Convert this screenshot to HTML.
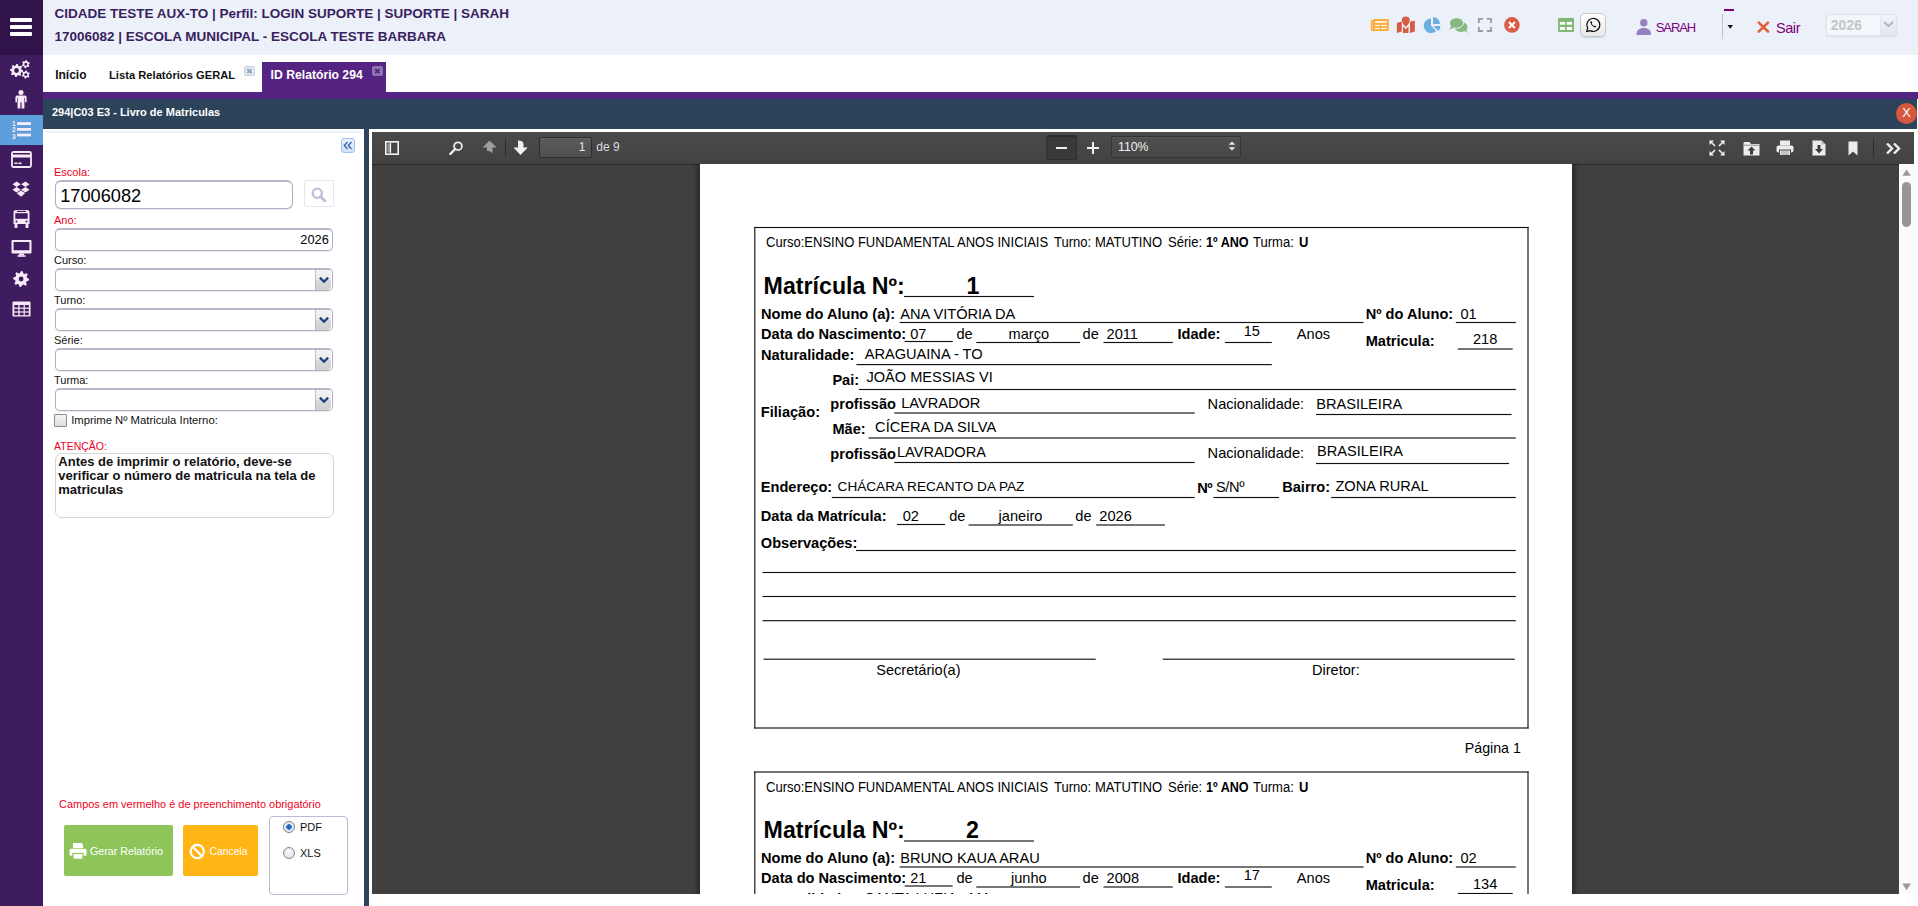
<!DOCTYPE html>
<html><head><meta charset="utf-8">
<style>
*{box-sizing:border-box;margin:0;padding:0}
html,body{width:1918px;height:906px;overflow:hidden;background:#fff;font-family:"Liberation Sans",sans-serif;color:#000}
.ab{position:absolute}
.t{position:absolute;white-space:nowrap;line-height:1}
.ln{position:absolute}
svg{position:absolute;display:block}
</style></head><body>
<div class="ab" style="left:0px;top:0px;width:43px;height:906px;background:#3f1b5f"></div>
<div class="ab" style="left:0px;top:0px;width:43px;height:55px;background:#2f1349"></div>
<div class="ab" style="left:0px;top:115px;width:43px;height:30px;background:#5d9fdc"></div>
<div class="ab" style="left:10px;top:18px;width:22px;height:3.5px;background:#fff;border-radius:1px"></div>
<div class="ab" style="left:10px;top:25px;width:22px;height:3.5px;background:#fff;border-radius:1px"></div>
<div class="ab" style="left:10px;top:32px;width:22px;height:3.5px;background:#fff;border-radius:1px"></div>
<div class="ab" style="left:43px;top:0px;width:1875px;height:55px;background:#ebf0f9"></div>
<div class="t" style="left:54.4px;top:6.6px;font-size:13.5px;font-weight:bold;color:#3a1f60;">CIDADE TESTE AUX-TO | Perfil: LOGIN SUPORTE | SUPORTE | SARAH</div>
<div class="t" style="left:54.4px;top:29.6px;font-size:13.5px;font-weight:bold;color:#3a1f60;">17006082 | ESCOLA MUNICIPAL - ESCOLA TESTE BARBARA</div>
<div class="ab" style="left:43px;top:55px;width:1875px;height:37px;background:#fff"></div>
<div class="t" style="left:55.2px;top:68.8px;font-size:12px;font-weight:bold;color:#111;">Início</div>
<div class="t" style="left:109.0px;top:69.5px;font-size:11.2px;font-weight:bold;color:#111;">Lista Relatórios GERAL</div>
<div class="ab" style="left:244px;top:66px;width:11px;height:10px;background:#e3e9f3;border:1px solid #c5d0e0;border-radius:2px"></div>
<div class="t" style="left:246.2px;top:67.7px;font-size:8px;color:#8fa4c4;">&#x2716;</div>
<div class="ab" style="left:262px;top:62px;width:124px;height:30px;background:#552482"></div>
<div class="t" style="left:270.6px;top:68.7px;font-size:12.2px;font-weight:bold;color:#fff;">ID Relatório 294</div>
<div class="ab" style="left:372px;top:65.5px;width:11px;height:10.5px;background:#8d75b0;border-radius:2px"></div>
<div class="t" style="left:374.2px;top:67.7px;font-size:8px;color:#552482;">&#x2716;</div>
<div class="ab" style="left:43px;top:92px;width:1875px;height:7px;background:#552482"></div>
<div class="ab" style="left:43px;top:99px;width:1874px;height:30px;background:#2c4359"></div>
<div class="ab" style="left:1917px;top:99px;width:1px;height:30px;background:#fff"></div>
<div class="t" style="left:52.0px;top:107.2px;font-size:11px;font-weight:bold;color:#fff;">294|C03 E3 - Livro de Matriculas</div>
<div class="ab" style="left:1896px;top:103px;width:21px;height:21px;background:#d5583f;border-radius:50%"></div>
<div class="t" style="left:1902.2px;top:107.2px;font-size:12.8px;color:#fff;">X</div>
<svg style="left:10px;top:60px" width="21" height="20" viewBox="0 0 21 20"><path d="M6.50 3.90 L7.79 4.03 L8.41 5.88 L9.28 6.34 L11.17 5.83 L11.99 6.83 L11.12 8.59 L11.40 9.52 L13.10 10.50 L12.97 11.79 L11.12 12.41 L10.66 13.28 L11.17 15.17 L10.17 15.99 L8.41 15.12 L7.48 15.40 L6.50 17.10 L5.21 16.97 L4.59 15.12 L3.72 14.66 L1.83 15.17 L1.01 14.17 L1.88 12.41 L1.60 11.48 L-0.10 10.50 L0.03 9.21 L1.88 8.59 L2.34 7.72 L1.83 5.83 L2.83 5.01 L4.59 5.88 L5.52 5.60 Z M8.90 10.50 A2.4 2.4 0 1 0 4.10 10.50 A2.4 2.4 0 1 0 8.90 10.50 ZM15.80 0.10 L16.86 0.24 L17.30 1.60 L17.92 2.08 L19.35 2.15 L19.76 3.14 L18.80 4.20 L18.70 4.98 L19.35 6.25 L18.70 7.10 L17.30 6.80 L16.58 7.10 L15.80 8.30 L14.74 8.16 L14.30 6.80 L13.68 6.32 L12.25 6.25 L11.84 5.26 L12.80 4.20 L12.90 3.42 L12.25 2.15 L12.90 1.30 L14.30 1.60 L15.02 1.30 Z M17.30 4.20 A1.5 1.5 0 1 0 14.30 4.20 A1.5 1.5 0 1 0 17.30 4.20 ZM15.80 10.40 L16.86 10.54 L17.30 11.90 L17.92 12.38 L19.35 12.45 L19.76 13.44 L18.80 14.50 L18.70 15.28 L19.35 16.55 L18.70 17.40 L17.30 17.10 L16.58 17.40 L15.80 18.60 L14.74 18.46 L14.30 17.10 L13.68 16.62 L12.25 16.55 L11.84 15.56 L12.80 14.50 L12.90 13.72 L12.25 12.45 L12.90 11.60 L14.30 11.90 L15.02 11.60 Z M17.30 14.50 A1.5 1.5 0 1 0 14.30 14.50 A1.5 1.5 0 1 0 17.30 14.50 Z" fill="#f7eaf7" fill-rule="evenodd"/></svg>
<svg style="left:15px;top:90px" width="13" height="19" viewBox="0 0 13 19"><circle cx="6" cy="2.6" r="2.5" fill="#f7eaf7"/><path d="M2.2 5.6 H9.8 A1.8 1.8 0 0 1 11.6 7.4 V12.2 H10 V7.8 H9.4 V18.6 H6.6 V12.4 H5.4 V18.6 H2.6 V7.8 H2 V12.2 H0.4 V7.4 A1.8 1.8 0 0 1 2.2 5.6 Z" fill="#f7eaf7"/></svg>
<svg style="left:12px;top:120px" width="20" height="19" viewBox="0 0 20 19"><text x="0" y="6" font-family="Liberation Sans" font-weight="bold" font-size="6.5" fill="#f7eaf7">1</text><text x="0" y="12" font-family="Liberation Sans" font-weight="bold" font-size="6.5" fill="#f7eaf7">2</text><text x="0" y="18.5" font-family="Liberation Sans" font-weight="bold" font-size="6.5" fill="#f7eaf7">3</text><rect x="5" y="2.2" width="14" height="2.8" fill="#f7eaf7"/><rect x="5" y="8" width="14" height="2.8" fill="#f7eaf7"/><rect x="5" y="13.6" width="14" height="2.8" fill="#f7eaf7"/></svg>
<svg style="left:11px;top:151px" width="21" height="17" viewBox="0 0 21 17"><rect x="1" y="1" width="19" height="15" rx="1.5" fill="none" stroke="#f7eaf7" stroke-width="1.8"/><rect x="1" y="3.5" width="19" height="3" fill="#f7eaf7"/><rect x="3.5" y="11.5" width="3" height="1.6" fill="#f7eaf7"/><rect x="7.5" y="11.5" width="3" height="1.6" fill="#f7eaf7"/></svg>
<svg style="left:12px;top:181px" width="18" height="17" viewBox="0 0 18 17"><path d="M4.5 0.5 L0.5 3.2 L4.5 6 L8.8 3.2 Z M13.5 0.5 L9.2 3.2 L13.5 6 L17.5 3.2 Z M4.5 6 L0.5 8.8 L4.5 11.4 L8.8 8.8 Z M13.5 6 L9.2 8.8 L13.5 11.4 L17.5 8.8 Z M9 9.6 L4.8 12.2 L9 15.8 L13.2 12.2 Z" fill="#f7eaf7"/></svg>
<svg style="left:13px;top:209px" width="17" height="20" viewBox="0 0 17 20"><path d="M3 1 H14 A2.5 2.5 0 0 1 16.5 3.5 V15 H0.5 V3.5 A2.5 2.5 0 0 1 3 1 Z" fill="#f7eaf7"/><rect x="2.3" y="4.2" width="12.4" height="5.6" fill="#3f1b5f"/><rect x="4" y="1.8" width="9" height="1.2" fill="#3f1b5f"/><circle cx="3.5" cy="12.5" r="1" fill="#3f1b5f"/><circle cx="13.5" cy="12.5" r="1" fill="#3f1b5f"/><rect x="1.5" y="15" width="3" height="4" rx="0.8" fill="#f7eaf7"/><rect x="12.5" y="15" width="3" height="4" rx="0.8" fill="#f7eaf7"/></svg>
<svg style="left:11px;top:239px" width="21" height="19" viewBox="0 0 21 19"><path d="M1.5 1 H19.5 A1 1 0 0 1 20.5 2 V13.5 A1 1 0 0 1 19.5 14.5 H1.5 A1 1 0 0 1 0.5 13.5 V2 A1 1 0 0 1 1.5 1 Z M2.6 3 V11.2 H18.4 V3 Z" fill="#f7eaf7" fill-rule="evenodd"/><rect x="8" y="14.5" width="5" height="1.8" fill="#f7eaf7"/><rect x="6.5" y="16.2" width="8" height="1.6" fill="#f7eaf7"/></svg>
<svg style="left:13px;top:271px" width="17" height="17" viewBox="0 0 17 17"><path d="M8.10 0.00 L9.66 0.15 L10.40 2.46 L11.43 3.01 L13.76 2.34 L14.75 3.56 L13.64 5.70 L13.98 6.83 L16.10 8.00 L15.95 9.56 L13.64 10.30 L13.09 11.33 L13.76 13.66 L12.54 14.65 L10.40 13.54 L9.27 13.88 L8.10 16.00 L6.54 15.85 L5.80 13.54 L4.77 12.99 L2.44 13.66 L1.45 12.44 L2.56 10.30 L2.22 9.17 L0.10 8.00 L0.25 6.44 L2.56 5.70 L3.11 4.67 L2.44 2.34 L3.66 1.35 L5.80 2.46 L6.93 2.12 Z M10.50 8.00 A2.4 2.4 0 1 0 5.70 8.00 A2.4 2.4 0 1 0 10.50 8.00 Z" fill="#f7eaf7" fill-rule="evenodd"/></svg>
<svg style="left:12px;top:301px" width="19" height="16" viewBox="0 0 19 16"><path d="M1.5 0.5 H17.5 A1 1 0 0 1 18.5 1.5 V14.5 A1 1 0 0 1 17.5 15.5 H1.5 A1 1 0 0 1 0.5 14.5 V1.5 A1 1 0 0 1 1.5 0.5 Z" fill="#f7eaf7"/><rect x="2.3" y="4" width="4" height="2.6" fill="#3f1b5f"/><rect x="7.6" y="4" width="4" height="2.6" fill="#3f1b5f"/><rect x="12.8" y="4" width="4" height="2.6" fill="#3f1b5f"/><rect x="2.3" y="7.8" width="4" height="2.6" fill="#3f1b5f"/><rect x="7.6" y="7.8" width="4" height="2.6" fill="#3f1b5f"/><rect x="12.8" y="7.8" width="4" height="2.6" fill="#3f1b5f"/><rect x="2.3" y="11.6" width="4" height="2.6" fill="#3f1b5f"/><rect x="7.6" y="11.6" width="4" height="2.6" fill="#3f1b5f"/><rect x="12.8" y="11.6" width="4" height="2.6" fill="#3f1b5f"/></svg>
<svg style="left:1370px;top:18px" width="20" height="14" viewBox="0 0 20 14"><rect x="3" y="0.9" width="15.8" height="12.1" rx="0.8" fill="#fdab3c"/><rect x="0.9" y="2.1" width="2.6" height="10.9" rx="0.8" fill="#fdab3c"/><rect x="2.1" y="3" width="0.5" height="9" fill="#fff" opacity=".55"/><rect x="5" y="3.2" width="11.8" height="1.6" fill="#fff"/><rect x="5" y="6.9" width="5" height="1.1" fill="#fff"/><rect x="11.2" y="6.9" width="5.6" height="1.1" fill="#fff"/><rect x="5" y="9.9" width="5" height="1.2" fill="#fff"/><rect x="11.2" y="9.9" width="5.6" height="1.2" fill="#fff"/></svg>
<svg style="left:1396px;top:16px" width="20" height="18" viewBox="0 0 20 18"><path d="M0.8 7 L5.8 5.6 L5.8 15.6 L0.8 17 Z M7 10.2 L9.8 13.2 L12.5 10.2 L12.5 17 L7 17 Z M14 5.8 L18.8 4.4 L18.8 15.6 L14 17 Z" fill="#d75c45"/><path d="M9.8 0.5 A4 4 0 0 1 13.8 4.5 C13.8 7 9.8 11 9.8 11 C9.8 11 5.8 7 5.8 4.5 A4 4 0 0 1 9.8 0.5 Z" fill="#d75c45"/></svg>
<svg style="left:1423px;top:17px" width="19" height="16" viewBox="0 0 19 16"><path d="M8 1.5 L8 8.8 L13.2 14 A7.3 7.3 0 1 1 8 1.5 Z" fill="#6aafe0"/><path d="M10 0 A7 7 0 0 1 17 7 L10 7 Z" fill="#6aafe0"/><path d="M10.5 9 L17.5 9 A7 7 0 0 1 15.2 14 Z" fill="#6aafe0"/></svg>
<svg style="left:1449px;top:17px" width="20" height="16" viewBox="0 0 20 16"><ellipse cx="12" cy="10" rx="6.5" ry="5" fill="#85b87d"/><path d="M15 13.5 L19 16 L16 11 Z" fill="#85b87d"/><ellipse cx="7.5" cy="6" rx="7" ry="5.3" fill="#85b87d" stroke="#ebf0f9" stroke-width="1"/><path d="M2 9 L0.5 12.5 L5 10.5 Z" fill="#85b87d"/></svg>
<svg style="left:1477px;top:17px" width="16" height="16" viewBox="0 0 16 16"><path d="M1.8 5.9 V1.9 H5.9 M9.9 1.9 H14 V5.9 M14 9.9 V14 H9.9 M5.9 14 H1.8 V9.9" stroke="#9a9a9a" stroke-width="1.8" fill="none"/></svg>
<svg style="left:1503px;top:17px" width="17" height="16" viewBox="0 0 17 16"><circle cx="8.9" cy="7.9" r="7.8" fill="#d95d45"/><path d="M5.9 4.9 L11.9 10.9 M11.9 4.9 L5.9 10.9" stroke="#fff" stroke-width="2.1"/></svg>
<svg style="left:1557px;top:17px" width="18" height="16" viewBox="0 0 18 16"><rect x="1" y="1" width="16" height="14" rx="1" fill="#82b676"/><rect x="2.8" y="4.9" width="5.2" height="2.8" fill="#fff"/><rect x="9.7" y="4.9" width="5.3" height="2.8" fill="#fff"/><rect x="2.8" y="10" width="5.2" height="3" fill="#fff"/><rect x="9.7" y="10" width="5.3" height="3" fill="#fff"/></svg>
<div class="ab" style="left:1580px;top:13px;width:26px;height:24px;background:linear-gradient(#fff,#e9e9e9);border:1px solid #c8c8c8;border-radius:5px;box-shadow:0 1px 1px rgba(0,0,0,.12)"></div>
<svg style="left:1585px;top:17px" width="16" height="16" viewBox="0 0 16 16"><path d="M1.6 14.6 L2.7 11.2 A6.5 6.5 0 1 1 5.2 13.6 Z" fill="none" stroke="#111" stroke-width="1.25" stroke-linejoin="round"/><path d="M5.4 4.3 C4.9 6.4 7.4 10 10.4 10.6 L11.3 9.4 L9.9 8.4 L9.1 9 C8.2 8.5 7.1 7.4 6.7 6.5 L7.3 5.7 L6.5 4.2 Z" fill="#111"/></svg>
<svg style="left:1636px;top:19px" width="16" height="16" viewBox="0 0 16 16"><circle cx="7.8" cy="3.8" r="3.7" fill="#9580c0"/><path d="M0.5 16 C0.5 11 3 9 7.8 9 C12.6 9 15 11 15 16 Z" fill="#9580c0"/></svg>
<div class="t" style="left:1655.8px;top:21.3px;font-size:13px;color:#800080;letter-spacing:-1.1px">SARAH</div>
<div class="ab" style="left:1724px;top:9px;width:10px;height:2.4px;background:#800080"></div>
<div class="ab" style="left:1722px;top:14px;width:1px;height:25px;background:#c3c3c8"></div>
<svg style="left:1727px;top:25px" width="7" height="4" viewBox="0 0 7 4"><path d="M0.5 0 L6 0 L3.25 3.7 Z" fill="#111"/></svg>
<svg style="left:1757px;top:21px" width="13" height="12" viewBox="0 0 13 12"><path d="M1.8 1.6 L11 10.5 M11 1.6 L1.8 10.5" stroke="#e0603c" stroke-width="2.6" stroke-linecap="round"/></svg>
<div class="t" style="left:1775.9px;top:20.5px;font-size:14.5px;color:#800080;letter-spacing:-0.4px">Sair</div>
<div class="ab" style="left:1826px;top:14px;width:71px;height:22px;background:#f3f6fa;border:1px solid #dfe4ec;border-radius:4px;box-shadow:0 1px 2px rgba(0,0,0,.08)"></div>
<div class="ab" style="left:1880px;top:15px;width:16px;height:20px;background:linear-gradient(#f1f3f6,#e3e7ec);border-left:1px solid #e2e6ee;border-radius:0 3px 3px 0"></div>
<div class="t" style="left:1830.7px;top:18.7px;font-size:13.8px;font-weight:bold;color:#c2c4c8;letter-spacing:0.2px">2026</div>
<svg style="left:1883px;top:21px" width="11" height="6" viewBox="0 0 11 6"><path d="M1 1 L5.5 5 L10 1" stroke="#a9b8d8" stroke-width="2" fill="none"/></svg>
<div class="ab" style="left:43px;top:129px;width:321px;height:777px;background:#fff"></div>
<div class="ab" style="left:47px;top:131px;width:314px;height:2px;background:#edf2f9"></div>
<div class="ab" style="left:341px;top:138px;width:14px;height:15px;background:linear-gradient(#e8f1fb,#d2e3f7);border:1px solid #9fc3ec;border-radius:3px"></div>
<svg style="left:343px;top:141px" width="10" height="9" viewBox="0 0 10 9"><path d="M4.5 1 L1.3 4.5 L4.5 8 M8.5 1 L5.3 4.5 L8.5 8" stroke="#3b6aab" stroke-width="1.4" fill="none"/></svg>
<div class="t" style="left:54.0px;top:166.7px;font-size:11px;color:#f0001c;">Escola:</div>
<div class="ab" style="left:55px;top:180px;width:238px;height:29px;background:#fff;border:1px solid #aab0c6;border-top:2px solid #b3b8cb;border-radius:6px;box-shadow:0 1px 1px rgba(0,0,0,.08)"></div>
<div class="t" style="left:60.2px;top:186.6px;font-size:18.2px;color:#000;">17006082</div>
<div class="ab" style="left:304px;top:180px;width:30px;height:27px;background:#fff;border:1px solid #e6e8ee;border-radius:2px"></div>
<svg style="left:311px;top:187px" width="16" height="15" viewBox="0 0 16 15"><circle cx="6.3" cy="6.3" r="4.6" stroke="#c5bbdf" stroke-width="2.3" fill="none"/><path d="M9.8 9.8 L14 14" stroke="#c5bbdf" stroke-width="2.8" stroke-linecap="round"/></svg>
<div class="t" style="left:54.0px;top:214.5px;font-size:11px;color:#f0001c;">Ano:</div>
<div class="ab" style="left:55px;top:228px;width:278px;height:22.5px;background:#fff;border:1px solid #aab0c6;border-top:2px solid #b3b8cb;border-radius:5px;box-shadow:0 1px 1px rgba(0,0,0,.08)"></div>
<div class="t" style="left:-71.2px;width:400px;text-align:right;top:234.2px;font-size:12.8px;color:#000;">2026</div>
<div class="t" style="left:54.0px;top:254.5px;font-size:11px;color:#111;">Curso:</div>
<div class="ab" style="left:55px;top:268.0px;width:278px;height:23px;background:#fff;border:1px solid #aab0c6;border-top:2px solid #b3b8cb;border-radius:5px;box-shadow:0 1px 1px rgba(0,0,0,.08)"></div>
<div class="ab" style="left:315px;top:270.0px;width:17px;height:20px;background:linear-gradient(#f3f3f3 0,#ececec 45%,#d6d6d6 55%,#d2d2d2 100%);border-left:1px solid #b9bdd0;border-radius:0 4px 4px 0;box-shadow:inset -1px 0 0 #fff"></div>
<svg style="left:318.5px;top:276.5px" width="11" height="7" viewBox="0 0 11 7"><path d="M0.8 0.6 L5 4.6 L9.2 0.6" stroke="#22427e" stroke-width="2.3" fill="none"/></svg>
<div class="t" style="left:54.0px;top:294.5px;font-size:11px;color:#111;">Turno:</div>
<div class="ab" style="left:55px;top:308.0px;width:278px;height:23px;background:#fff;border:1px solid #aab0c6;border-top:2px solid #b3b8cb;border-radius:5px;box-shadow:0 1px 1px rgba(0,0,0,.08)"></div>
<div class="ab" style="left:315px;top:310.0px;width:17px;height:20px;background:linear-gradient(#f3f3f3 0,#ececec 45%,#d6d6d6 55%,#d2d2d2 100%);border-left:1px solid #b9bdd0;border-radius:0 4px 4px 0;box-shadow:inset -1px 0 0 #fff"></div>
<svg style="left:318.5px;top:316.5px" width="11" height="7" viewBox="0 0 11 7"><path d="M0.8 0.6 L5 4.6 L9.2 0.6" stroke="#22427e" stroke-width="2.3" fill="none"/></svg>
<div class="t" style="left:54.0px;top:335.0px;font-size:11px;color:#111;">Série:</div>
<div class="ab" style="left:55px;top:348.0px;width:278px;height:23px;background:#fff;border:1px solid #aab0c6;border-top:2px solid #b3b8cb;border-radius:5px;box-shadow:0 1px 1px rgba(0,0,0,.08)"></div>
<div class="ab" style="left:315px;top:350.0px;width:17px;height:20px;background:linear-gradient(#f3f3f3 0,#ececec 45%,#d6d6d6 55%,#d2d2d2 100%);border-left:1px solid #b9bdd0;border-radius:0 4px 4px 0;box-shadow:inset -1px 0 0 #fff"></div>
<svg style="left:318.5px;top:356.5px" width="11" height="7" viewBox="0 0 11 7"><path d="M0.8 0.6 L5 4.6 L9.2 0.6" stroke="#22427e" stroke-width="2.3" fill="none"/></svg>
<div class="t" style="left:54.0px;top:375.1px;font-size:11px;color:#111;">Turma:</div>
<div class="ab" style="left:55px;top:388.0px;width:278px;height:23px;background:#fff;border:1px solid #aab0c6;border-top:2px solid #b3b8cb;border-radius:5px;box-shadow:0 1px 1px rgba(0,0,0,.08)"></div>
<div class="ab" style="left:315px;top:390.0px;width:17px;height:20px;background:linear-gradient(#f3f3f3 0,#ececec 45%,#d6d6d6 55%,#d2d2d2 100%);border-left:1px solid #b9bdd0;border-radius:0 4px 4px 0;box-shadow:inset -1px 0 0 #fff"></div>
<svg style="left:318.5px;top:396.5px" width="11" height="7" viewBox="0 0 11 7"><path d="M0.8 0.6 L5 4.6 L9.2 0.6" stroke="#22427e" stroke-width="2.3" fill="none"/></svg>
<div class="ab" style="left:54px;top:414px;width:13px;height:13px;background:linear-gradient(#f3f3f3,#dedede);border:1px solid #8d8d8d;border-radius:1px"></div>
<div class="t" style="left:71.2px;top:414.8px;font-size:11.3px;color:#111;">Imprime Nº Matricula Interno:</div>
<div class="t" style="left:54.0px;top:440.5px;font-size:10.5px;color:#f0001c;">ATENÇÃO:</div>
<div class="ab" style="left:54.5px;top:453px;width:279px;height:64.5px;background:#fff;border:1px solid #d6d6d6;border-radius:7px"></div>
<div class="t" style="left:58.3px;top:454.7px;font-size:13px;font-weight:bold;color:#111;">Antes de imprimir o relatório, deve-se</div>
<div class="t" style="left:58.3px;top:468.6px;font-size:13px;font-weight:bold;color:#111;">verificar o número de matricula na tela de</div>
<div class="t" style="left:58.3px;top:482.6px;font-size:13px;font-weight:bold;color:#111;">matriculas</div>
<div class="t" style="left:59.0px;top:798.8px;font-size:10.96px;color:#f0001c;">Campos em vermelho é de preenchimento obrigatório</div>
<div class="ab" style="left:64px;top:825px;width:109px;height:50.5px;background:#8ec55a;border-radius:2px"></div>
<svg style="left:69px;top:842px" width="18" height="18" viewBox="0 0 18 18"><path d="M4 1 H12.5 L14 2.5 V6 H4 Z" fill="#fff"/><rect x="0.5" y="6.8" width="17" height="7" rx="1.5" fill="#fff"/><rect x="4" y="11.5" width="10" height="5.8" fill="#fff" stroke="#8ec55a" stroke-width="1.2"/><rect x="5" y="3" width="7" height="2.5" fill="#8ec55a" opacity="0"/></svg>
<div class="t" style="left:90.0px;top:845.9px;font-size:10.7px;color:#fff;">Gerar Relatório</div>
<div class="ab" style="left:183px;top:825px;width:75px;height:50.5px;background:#ffb515;border-radius:2px"></div>
<svg style="left:189px;top:842.5px" width="17" height="17" viewBox="0 0 17 17"><circle cx="8.3" cy="8.5" r="6.6" stroke="#fff" stroke-width="2.2" fill="none"/><path d="M3.8 4 L12.8 13" stroke="#fff" stroke-width="2.2"/></svg>
<div class="t" style="left:209.6px;top:847.1px;font-size:10.3px;color:#fff;">Cancela</div>
<div class="ab" style="left:268.5px;top:815.5px;width:79.5px;height:79px;background:#fff;border:1px solid #b9bdd4;border-radius:4px"></div>
<div class="ab" style="left:283px;top:821px;width:12px;height:12px;background:radial-gradient(circle at 50% 50%,#1f5fa8 0,#2a78c8 2.5px,#d6e4f2 3px,#eef3f8 5px);border:1px solid #7d7d7d;border-radius:50%"></div>
<div class="t" style="left:300.0px;top:821.7px;font-size:11px;color:#111;">PDF</div>
<div class="ab" style="left:283px;top:847px;width:12px;height:12px;background:radial-gradient(circle at 50% 40%,#fdfdfd,#d8d8d8);border:1px solid #8a8a8a;border-radius:50%"></div>
<div class="t" style="left:300.0px;top:847.7px;font-size:11px;color:#111;">XLS</div>
<div class="ab" style="left:364px;top:129px;width:5px;height:777px;background:#2c4359"></div>
<div class="ab" style="left:372px;top:132px;width:1542px;height:762px;background:#404040"></div>
<div class="ab" style="left:372px;top:132px;width:1542px;height:32px;background:linear-gradient(#4a4a4a,#424242);box-shadow:0 1px 0 rgba(0,0,0,.35)"></div>
<svg style="left:385px;top:141px" width="14" height="14" viewBox="0 0 14 14"><rect x="0.8" y="0.8" width="12.4" height="12.4" fill="none" stroke="#f2f2f2" stroke-width="1.6"/><rect x="2.4" y="2.4" width="2.6" height="9.2" fill="#9a9a9a"/><rect x="5" y="1.6" width="1.1" height="10.8" fill="#f2f2f2"/></svg>
<svg style="left:449px;top:141px" width="15" height="14" viewBox="0 0 15 14"><circle cx="9" cy="5.2" r="3.9" stroke="#eee" stroke-width="1.8" fill="none"/><path d="M6.2 8 L1.4 12.8" stroke="#eee" stroke-width="2.4" stroke-linecap="round"/></svg>
<svg style="left:482px;top:140px" width="16" height="16" viewBox="0 0 16 16"><path d="M7.5 0.5 L14.8 7.5 H10.5 V14.5 C10.5 12 8 11 5 11 V7.5 H0.5 Z" fill="#9d9d9d"/></svg>
<div class="ab" style="left:505px;top:139px;width:1px;height:17px;background:#2b2b2b"></div>
<svg style="left:513px;top:140px" width="16" height="16" viewBox="0 0 16 16"><path d="M5 0.5 C8 0.5 10.5 1.5 10.5 4 V7.5 H14.8 L7.5 15 L0.5 7.5 H5 Z" fill="#f0f0f0"/></svg>
<div class="ab" style="left:539px;top:136.5px;width:53px;height:21px;background:linear-gradient(#5a5a5a,#505050);border:1px solid #2e2e2e;border-radius:2px;box-shadow:inset 0 1px 0 rgba(255,255,255,.06)"></div>
<div class="t" style="left:185.5px;width:400px;text-align:right;top:140.8px;font-size:12px;color:#e6e6e6;">1</div>
<div class="t" style="left:596.3px;top:140.8px;font-size:12px;color:#dcdcdc;">de 9</div>
<div class="ab" style="left:1046px;top:135px;width:31px;height:24.5px;background:#3a3a3a;border:1px solid #2f2f2f;border-radius:2px;box-shadow:inset 0 1px 1px rgba(0,0,0,.25)"></div>
<div class="ab" style="left:1056px;top:147px;width:11px;height:2.2px;background:#f0f0f0"></div>
<div class="ab" style="left:1087px;top:146.8px;width:11.5px;height:2.4px;background:#f0f0f0"></div>
<div class="ab" style="left:1091.5px;top:142px;width:2.4px;height:11.8px;background:#f0f0f0"></div>
<div class="ab" style="left:1111px;top:135.5px;width:130px;height:22.5px;background:linear-gradient(#4f4f4f,#474747);border:1px solid #333;border-radius:2px;box-shadow:inset 0 1px 0 rgba(255,255,255,.05)"></div>
<div class="t" style="left:1118.0px;top:140.6px;font-size:12.3px;color:#f2f2f2;">110%</div>
<svg style="left:1228px;top:141px" width="8" height="10" viewBox="0 0 8 10"><path d="M4 0.5 L7.3 3.8 H0.7 Z M4 9.5 L7.3 6.2 H0.7 Z" fill="#e8e8e8"/></svg>
<svg style="left:1709px;top:140px" width="16" height="16" viewBox="0 0 16 16"><path d="M1 1 L6 6 M15 1 L10 6 M1 15 L6 10 M15 15 L10 10" stroke="#eee" stroke-width="1.6"/><path d="M0.5 0.5 H5 L0.5 5 Z M15.5 0.5 H11 L15.5 5 Z M0.5 15.5 H5 L0.5 11 Z M15.5 15.5 H11 L15.5 11 Z" fill="#eee"/></svg>
<svg style="left:1743px;top:140px" width="17" height="16" viewBox="0 0 17 16"><path d="M0.5 3 V15.5 H16.5 V4 H8 L6.5 2 H1.5 Z" fill="#ececec"/><path d="M0.5 5.2 H16.5" stroke="#777" stroke-width="0.8"/><path d="M8.5 6.5 L12.5 10.5 H10 V14.5 H7 V10.5 H4.5 Z" fill="#3d3d3d"/></svg>
<svg style="left:1776px;top:140px" width="18" height="16" viewBox="0 0 18 16"><rect x="4" y="0.5" width="10" height="5" fill="#ececec"/><rect x="0.5" y="5.5" width="17" height="7" rx="2" fill="#ececec"/><rect x="3.5" y="10" width="11" height="5.5" fill="#ececec" stroke="#444" stroke-width="1"/><path d="M5 12 H13 M5 14 H13" stroke="#888" stroke-width="0.8"/></svg>
<svg style="left:1812px;top:140px" width="14" height="16" viewBox="0 0 14 16"><path d="M0.5 0.5 H9.5 L13.5 4.5 V15.5 H0.5 Z" fill="#ececec"/><path d="M9.5 0.5 V4.5 H13.5" fill="#bbb"/><path d="M5.5 5 H8.5 V9 H11 L7 13.5 L3 9 H5.5 Z" fill="#3d3d3d"/></svg>
<svg style="left:1848px;top:141px" width="10" height="15" viewBox="0 0 10 15"><path d="M0.5 0.5 H9.5 V14.5 L5 10.5 L0.5 14.5 Z" fill="#ececec"/></svg>
<div class="ab" style="left:1873px;top:139px;width:1px;height:17.5px;background:#2b2b2b"></div>
<svg style="left:1886px;top:143px" width="16" height="11" viewBox="0 0 16 11"><path d="M1 0.5 L6 5.5 L1 10.5 M8 0.5 L13 5.5 L8 10.5" stroke="#eee" stroke-width="2.4" fill="none"/></svg>
<div class="ab" style="left:1899px;top:164px;width:15px;height:730px;background:#fbfbfb"></div>
<svg style="left:1902px;top:169px" width="10" height="8" viewBox="0 0 10 8"><path d="M4.6 0.5 L9 6.8 H0.3 Z" fill="#9a9a9a"/></svg>
<div class="ab" style="left:1902px;top:182px;width:9px;height:45px;background:#969696;border-radius:5px"></div>
<svg style="left:1902px;top:883px" width="10" height="8" viewBox="0 0 10 8"><path d="M4.6 7.3 L9 0.6 H0.3 Z" fill="#9a9a9a"/></svg>
<div class="ab" style="left:372px;top:164px;width:1527px;height:729.5px;overflow:hidden"><div class="ab" style="left:-372px;top:-164px;width:1918px;height:906px">
<div class="ab" style="left:700px;top:164px;width:872px;height:760px;background:#fff;box-shadow:-3px 0 6px rgba(0,0,0,.35), 3px 0 6px rgba(0,0,0,.35)"></div>
<div class="t" style="left:766.4px;top:235.2px;font-size:14.0px;transform:scaleX(0.93);transform-origin:0 0;">Curso:ENSINO FUNDAMENTAL ANOS INICIAIS</div>
<div class="t" style="left:1053.8px;top:235.2px;font-size:14.0px;transform:scaleX(0.93);transform-origin:0 0;">Turno:</div>
<div class="t" style="left:1095.0px;top:235.2px;font-size:14.0px;transform:scaleX(0.93);transform-origin:0 0;">MATUTINO</div>
<div class="t" style="left:1167.6px;top:235.2px;font-size:14.0px;transform:scaleX(0.93);transform-origin:0 0;">Série:</div>
<div class="t" style="left:1206.4px;top:235.2px;font-size:14.0px;font-weight:bold;transform:scaleX(0.9);transform-origin:0 0;">1º ANO</div>
<div class="t" style="left:1252.7px;top:235.2px;font-size:14.0px;transform:scaleX(0.93);transform-origin:0 0;">Turma:</div>
<div class="t" style="left:1299.0px;top:235.2px;font-size:14.0px;font-weight:bold;transform:scaleX(0.93);transform-origin:0 0;">U</div>
<div class="t" style="left:763.6px;top:274.8px;font-size:23.2px;font-weight:bold;">Matrícula Nº:</div>
<div class="t" style="left:966.6px;top:274.8px;font-size:23.2px;font-weight:bold;">1</div>
<div class="t" style="left:761.0px;top:306.9px;font-size:14.6px;font-weight:bold;">Nome do Aluno (a):</div>
<div class="t" style="left:900.2px;top:306.9px;font-size:14.6px;">ANA VITÓRIA DA</div>
<div class="t" style="left:1365.7px;top:306.6px;font-size:14.6px;font-weight:bold;">Nº do Aluno:</div>
<div class="t" style="left:1460.5px;top:306.6px;font-size:14.6px;">01</div>
<div class="t" style="left:761.0px;top:326.8px;font-size:14.6px;font-weight:bold;">Data do Nascimento:</div>
<div class="t" style="left:910.2px;top:326.8px;font-size:14.6px;">07</div>
<div class="t" style="left:956.5px;top:326.8px;font-size:14.6px;">de</div>
<div class="t" style="left:1008.6px;top:326.8px;font-size:14.6px;">março</div>
<div class="t" style="left:1082.6px;top:326.8px;font-size:14.6px;">de</div>
<div class="t" style="left:1106.6px;top:326.8px;font-size:14.6px;">2011</div>
<div class="t" style="left:1177.5px;top:327.0px;font-size:14.6px;font-weight:bold;">Idade:</div>
<div class="t" style="left:1243.7px;top:323.9px;font-size:14.6px;">15</div>
<div class="t" style="left:1296.8px;top:327.0px;font-size:14.6px;">Anos</div>
<div class="t" style="left:1365.7px;top:333.7px;font-size:14.6px;font-weight:bold;">Matricula:</div>
<div class="t" style="left:1473.0px;top:332.2px;font-size:14.6px;">218</div>
<div class="t" style="left:761.0px;top:347.6px;font-size:14.6px;font-weight:bold;">Naturalidade:</div>
<div class="t" style="left:864.7px;top:346.6px;font-size:14.6px;">ARAGUAINA - TO</div>
<div class="t" style="left:832.4px;top:372.7px;font-size:14.6px;font-weight:bold;">Pai:</div>
<div class="t" style="left:866.4px;top:369.5px;font-size:14.6px;">JOÃO MESSIAS VI</div>
<div class="t" style="left:760.8px;top:405.3px;font-size:14.6px;font-weight:bold;">Filiação:</div>
<div class="t" style="left:830.3px;top:396.6px;font-size:14.6px;font-weight:bold;">profissão</div>
<div class="t" style="left:901.2px;top:395.9px;font-size:14.6px;">LAVRADOR</div>
<div class="t" style="left:1207.6px;top:397.0px;font-size:14.6px;">Nacionalidade:</div>
<div class="t" style="left:1316.2px;top:397.0px;font-size:14.6px;">BRASILEIRA</div>
<div class="t" style="left:832.4px;top:422.4px;font-size:14.6px;font-weight:bold;">Mãe:</div>
<div class="t" style="left:875.1px;top:419.9px;font-size:14.6px;">CÍCERA DA SILVA</div>
<div class="t" style="left:830.3px;top:446.6px;font-size:14.6px;font-weight:bold;">profissão</div>
<div class="t" style="left:897.0px;top:444.9px;font-size:14.6px;">LAVRADORA</div>
<div class="t" style="left:1207.6px;top:445.6px;font-size:14.6px;">Nacionalidade:</div>
<div class="t" style="left:1317.0px;top:443.9px;font-size:14.6px;">BRASILEIRA</div>
<div class="t" style="left:760.8px;top:479.5px;font-size:14.6px;font-weight:bold;">Endereço:</div>
<div class="t" style="left:837.6px;top:480.0px;font-size:13.6px;">CHÁCARA RECANTO DA PAZ</div>
<div class="t" style="left:1197.2px;top:480.7px;font-size:14.6px;font-weight:bold;letter-spacing:-0.5px">Nº</div>
<div class="t" style="left:1215.9px;top:479.7px;font-size:14.6px;letter-spacing:-0.3px">S/Nº</div>
<div class="t" style="left:1282.2px;top:480.0px;font-size:14.6px;font-weight:bold;">Bairro:</div>
<div class="t" style="left:1335.4px;top:479.2px;font-size:14.6px;">ZONA RURAL</div>
<div class="t" style="left:760.8px;top:509.3px;font-size:14.6px;font-weight:bold;">Data da Matrícula:</div>
<div class="t" style="left:902.7px;top:509.2px;font-size:14.6px;">02</div>
<div class="t" style="left:949.2px;top:509.2px;font-size:14.6px;">de</div>
<div class="t" style="left:998.6px;top:509.2px;font-size:14.6px;">janeiro</div>
<div class="t" style="left:1075.3px;top:509.2px;font-size:14.6px;">de</div>
<div class="t" style="left:1099.3px;top:509.2px;font-size:14.6px;">2026</div>
<div class="t" style="left:760.8px;top:535.8px;font-size:14.6px;font-weight:bold;">Observações:</div>
<div class="t" style="left:876.2px;top:663.1px;font-size:14.6px;">Secretário(a)</div>
<div class="t" style="left:1311.9px;top:663.1px;font-size:14.6px;">Diretor:</div>
<div class="t" style="left:1464.8px;top:740.6px;font-size:14.2px;">Página 1</div>
<div class="t" style="left:766.4px;top:779.5px;font-size:14.0px;transform:scaleX(0.93);transform-origin:0 0;">Curso:ENSINO FUNDAMENTAL ANOS INICIAIS</div>
<div class="t" style="left:1053.8px;top:779.5px;font-size:14.0px;transform:scaleX(0.93);transform-origin:0 0;">Turno:</div>
<div class="t" style="left:1095.0px;top:779.5px;font-size:14.0px;transform:scaleX(0.93);transform-origin:0 0;">MATUTINO</div>
<div class="t" style="left:1167.6px;top:779.5px;font-size:14.0px;transform:scaleX(0.93);transform-origin:0 0;">Série:</div>
<div class="t" style="left:1206.4px;top:779.5px;font-size:14.0px;font-weight:bold;transform:scaleX(0.9);transform-origin:0 0;">1º ANO</div>
<div class="t" style="left:1252.7px;top:779.5px;font-size:14.0px;transform:scaleX(0.93);transform-origin:0 0;">Turma:</div>
<div class="t" style="left:1299.0px;top:779.5px;font-size:14.0px;font-weight:bold;transform:scaleX(0.93);transform-origin:0 0;">U</div>
<div class="t" style="left:763.6px;top:819.1px;font-size:23.2px;font-weight:bold;">Matrícula Nº:</div>
<div class="t" style="left:965.9px;top:819.1px;font-size:23.2px;font-weight:bold;">2</div>
<div class="t" style="left:761.0px;top:851.2px;font-size:14.6px;font-weight:bold;">Nome do Aluno (a):</div>
<div class="t" style="left:900.2px;top:851.2px;font-size:14.6px;">BRUNO KAUA ARAU</div>
<div class="t" style="left:1365.7px;top:850.9px;font-size:14.6px;font-weight:bold;">Nº do Aluno:</div>
<div class="t" style="left:1460.5px;top:850.9px;font-size:14.6px;">02</div>
<div class="t" style="left:761.0px;top:871.1px;font-size:14.6px;font-weight:bold;">Data do Nascimento:</div>
<div class="t" style="left:910.2px;top:871.1px;font-size:14.6px;">21</div>
<div class="t" style="left:956.5px;top:871.1px;font-size:14.6px;">de</div>
<div class="t" style="left:1011.0px;top:871.1px;font-size:14.6px;">junho</div>
<div class="t" style="left:1082.6px;top:871.1px;font-size:14.6px;">de</div>
<div class="t" style="left:1106.6px;top:871.1px;font-size:14.6px;">2008</div>
<div class="t" style="left:1177.5px;top:871.3px;font-size:14.6px;font-weight:bold;">Idade:</div>
<div class="t" style="left:1243.7px;top:868.2px;font-size:14.6px;">17</div>
<div class="t" style="left:1296.8px;top:871.3px;font-size:14.6px;">Anos</div>
<div class="t" style="left:1365.7px;top:878.0px;font-size:14.6px;font-weight:bold;">Matricula:</div>
<div class="t" style="left:1473.0px;top:876.5px;font-size:14.6px;">134</div>
<div class="t" style="left:761.0px;top:891.9px;font-size:14.6px;font-weight:bold;">Naturalidade:</div>
<div class="t" style="left:864.7px;top:890.9px;font-size:14.6px;">SANTA LUZIA - MA</div>
<div class="t" style="left:832.4px;top:917.0px;font-size:14.6px;font-weight:bold;">Pai:</div>
<div class="t" style="left:866.4px;top:913.8px;font-size:14.6px;"></div>
<div class="t" style="left:760.8px;top:949.6px;font-size:14.6px;font-weight:bold;">Filiação:</div>
<div class="t" style="left:830.3px;top:940.9px;font-size:14.6px;font-weight:bold;">profissão</div>
<div class="t" style="left:901.2px;top:940.2px;font-size:14.6px;"></div>
<div class="t" style="left:1207.6px;top:941.3px;font-size:14.6px;">Nacionalidade:</div>
<div class="t" style="left:1316.2px;top:941.3px;font-size:14.6px;">BRASILEIRA</div>
<div class="t" style="left:832.4px;top:966.7px;font-size:14.6px;font-weight:bold;">Mãe:</div>
<div class="t" style="left:875.1px;top:964.2px;font-size:14.6px;"></div>
<div class="t" style="left:830.3px;top:990.9px;font-size:14.6px;font-weight:bold;">profissão</div>
<div class="t" style="left:897.0px;top:989.2px;font-size:14.6px;"></div>
<div class="t" style="left:1207.6px;top:989.9px;font-size:14.6px;">Nacionalidade:</div>
<div class="t" style="left:1317.0px;top:988.2px;font-size:14.6px;">BRASILEIRA</div>
<div class="t" style="left:760.8px;top:1023.8px;font-size:14.6px;font-weight:bold;">Endereço:</div>
<div class="t" style="left:837.6px;top:1024.3px;font-size:13.6px;"></div>
<div class="t" style="left:1197.2px;top:1025.0px;font-size:14.6px;font-weight:bold;letter-spacing:-0.5px">Nº</div>
<div class="t" style="left:1215.9px;top:1024.0px;font-size:14.6px;letter-spacing:-0.3px">S/Nº</div>
<div class="t" style="left:1282.2px;top:1024.3px;font-size:14.6px;font-weight:bold;">Bairro:</div>
<div class="t" style="left:1335.4px;top:1023.5px;font-size:14.6px;"></div>
<div class="t" style="left:760.8px;top:1053.6px;font-size:14.6px;font-weight:bold;">Data da Matrícula:</div>
<div class="t" style="left:902.7px;top:1053.5px;font-size:14.6px;">02</div>
<div class="t" style="left:949.2px;top:1053.5px;font-size:14.6px;">de</div>
<div class="t" style="left:998.6px;top:1053.5px;font-size:14.6px;">janeiro</div>
<div class="t" style="left:1075.3px;top:1053.5px;font-size:14.6px;">de</div>
<div class="t" style="left:1099.3px;top:1053.5px;font-size:14.6px;">2026</div>
<div class="t" style="left:760.8px;top:1080.1px;font-size:14.6px;font-weight:bold;">Observações:</div>
<div class="t" style="left:876.2px;top:1207.4px;font-size:14.6px;">Secretário(a)</div>
<div class="t" style="left:1311.9px;top:1207.4px;font-size:14.6px;">Diretor:</div>
<div class="t" style="left:1464.8px;top:1284.9px;font-size:14.2px;">Página 1</div>
<svg style="left:0;top:0" width="1918" height="906" viewBox="0 0 1918 906"><rect x="754.2" y="226.925" width="774.4" height="1.15" fill="#111"/><rect x="754.2" y="727.425" width="774.4" height="1.15" fill="#111"/><rect x="754.225" y="227.0" width="1.15" height="501.5" fill="#111"/><rect x="1527.425" y="227.0" width="1.15" height="501.5" fill="#111"/><rect x="904.0" y="295.925" width="130.0" height="1.15" fill="#111"/><rect x="899.7" y="321.925" width="463.9" height="1.15" fill="#111"/><rect x="1455.8" y="321.925" width="60.0" height="1.15" fill="#111"/><rect x="904.7" y="340.925" width="48.0" height="1.15" fill="#111"/><rect x="976.3" y="341.925" width="103.7" height="1.15" fill="#111"/><rect x="1103.5" y="341.925" width="69.3" height="1.15" fill="#111"/><rect x="1224.9" y="341.925" width="46.9" height="1.15" fill="#111"/><rect x="1457.8" y="348.425" width="54.9" height="1.15" fill="#111"/><rect x="856.4" y="364.025" width="415.4" height="1.15" fill="#111"/><rect x="858.9" y="388.925" width="656.9" height="1.15" fill="#111"/><rect x="894.3" y="412.425" width="300.4" height="1.15" fill="#111"/><rect x="1316.0" y="413.925" width="195.6" height="1.15" fill="#111"/><rect x="868.5" y="437.425" width="647.3" height="1.15" fill="#111"/><rect x="894.3" y="461.925" width="300.4" height="1.15" fill="#111"/><rect x="1316.0" y="462.925" width="193.1" height="1.15" fill="#111"/><rect x="831.8" y="496.925" width="362.9" height="1.15" fill="#111"/><rect x="1213.4" y="496.925" width="65.7" height="1.15" fill="#111"/><rect x="1331.2" y="496.925" width="184.6" height="1.15" fill="#111"/><rect x="897.0" y="523.925" width="48.0" height="1.15" fill="#111"/><rect x="968.6" y="524.425" width="104.2" height="1.15" fill="#111"/><rect x="1096.2" y="524.425" width="68.7" height="1.15" fill="#111"/><rect x="856.0" y="549.925" width="659.8" height="1.15" fill="#111"/><rect x="762.5" y="571.925" width="753.3" height="1.15" fill="#111"/><rect x="762.5" y="595.925" width="753.3" height="1.15" fill="#111"/><rect x="762.5" y="620.125" width="753.3" height="1.15" fill="#111"/><rect x="763.6" y="658.625" width="332.1" height="1.15" fill="#111"/><rect x="1162.8" y="658.625" width="352.0" height="1.15" fill="#111"/><rect x="754.2" y="771.425" width="774.4" height="1.15" fill="#111"/><rect x="754.2" y="1271.925" width="774.4" height="1.15" fill="#111"/><rect x="754.225" y="771.5" width="1.15" height="501.5" fill="#111"/><rect x="1527.425" y="771.5" width="1.15" height="501.5" fill="#111"/><rect x="904.0" y="840.425" width="130.0" height="1.15" fill="#111"/><rect x="899.7" y="866.425" width="463.9" height="1.15" fill="#111"/><rect x="1455.8" y="866.425" width="60.0" height="1.15" fill="#111"/><rect x="904.7" y="885.425" width="48.0" height="1.15" fill="#111"/><rect x="976.3" y="886.425" width="103.7" height="1.15" fill="#111"/><rect x="1103.5" y="886.425" width="69.3" height="1.15" fill="#111"/><rect x="1224.9" y="886.425" width="46.9" height="1.15" fill="#111"/><rect x="1457.8" y="892.925" width="54.9" height="1.15" fill="#111"/><rect x="856.4" y="908.525" width="415.4" height="1.15" fill="#111"/><rect x="858.9" y="933.425" width="656.9" height="1.15" fill="#111"/><rect x="894.3" y="956.925" width="300.4" height="1.15" fill="#111"/><rect x="1316.0" y="958.425" width="195.6" height="1.15" fill="#111"/><rect x="868.5" y="981.925" width="647.3" height="1.15" fill="#111"/><rect x="894.3" y="1006.425" width="300.4" height="1.15" fill="#111"/><rect x="1316.0" y="1007.425" width="193.1" height="1.15" fill="#111"/><rect x="831.8" y="1041.425" width="362.9" height="1.15" fill="#111"/><rect x="1213.4" y="1041.425" width="65.7" height="1.15" fill="#111"/><rect x="1331.2" y="1041.425" width="184.6" height="1.15" fill="#111"/><rect x="897.0" y="1068.425" width="48.0" height="1.15" fill="#111"/><rect x="968.6" y="1068.925" width="104.2" height="1.15" fill="#111"/><rect x="1096.2" y="1068.925" width="68.7" height="1.15" fill="#111"/><rect x="856.0" y="1094.425" width="659.8" height="1.15" fill="#111"/><rect x="762.5" y="1116.425" width="753.3" height="1.15" fill="#111"/><rect x="762.5" y="1140.425" width="753.3" height="1.15" fill="#111"/><rect x="762.5" y="1164.625" width="753.3" height="1.15" fill="#111"/><rect x="763.6" y="1203.125" width="332.1" height="1.15" fill="#111"/><rect x="1162.8" y="1203.125" width="352.0" height="1.15" fill="#111"/></svg>
</div></div>
</body></html>
